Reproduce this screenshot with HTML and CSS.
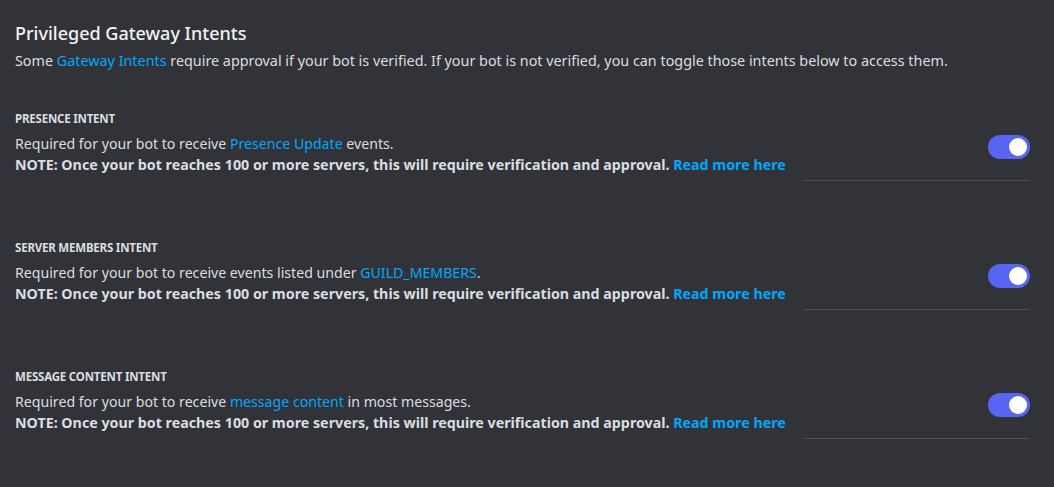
FILE: index.html
```html
<!DOCTYPE html>
<html>
<head>
<meta charset="utf-8">
<link rel="stylesheet" href="styles.css">
</head>
<body>
<div class="page">
  <h2 class="title">Privileged Gateway Intents</h2>
  <p class="desc">Some <a class="link">Gateway Intents</a> require approval if your bot is verified. If your bot is not verified, you can toggle those intents below to access them.</p>

  <section class="intent">
    <div class="label">PRESENCE INTENT</div>
    <div class="row">
      <div class="text">
        <div class="line">Required for your bot to receive <a class="link">Presence Update</a> events.</div>
        <div class="note">NOTE: Once your bot reaches 100 or more servers, this will require verification and approval. <a class="link">Read more here</a></div>
      </div>
      <div class="side"><span class="toggle"><span class="knob"></span></span></div>
    </div>
  </section>

  <section class="intent">
    <div class="label">SERVER MEMBERS INTENT</div>
    <div class="row">
      <div class="text">
        <div class="line">Required for your bot to receive events listed under <a class="link">GUILD_MEMBERS</a>.</div>
        <div class="note">NOTE: Once your bot reaches 100 or more servers, this will require verification and approval. <a class="link">Read more here</a></div>
      </div>
      <div class="side"><span class="toggle"><span class="knob"></span></span></div>
    </div>
  </section>

  <section class="intent">
    <div class="label">MESSAGE CONTENT INTENT</div>
    <div class="row">
      <div class="text">
        <div class="line">Required for your bot to receive <a class="link">message content</a> in most messages.</div>
        <div class="note">NOTE: Once your bot reaches 100 or more servers, this will require verification and approval. <a class="link">Read more here</a></div>
      </div>
      <div class="side"><span class="toggle"><span class="knob"></span></span></div>
    </div>
  </section>
</div>
</body>
</html>
```

FILE: styles.css
```css
html, body {
  margin: 0;
  padding: 0;
  background: #313338;
}
body {
  font-family: "Noto Sans", "Open Sans", sans-serif;
  color: #dbdee1;
  width: 1054px;
  height: 487px;
  overflow: hidden;
}
.page {
  padding: 20px 24px 0 15px;
}
.title {
  margin: 0;
  font-size: 18px;
  font-weight: 500;
  line-height: 26px;
  color: #f2f3f5;
}
.desc {
  margin: 5px 0 0;
  font-size: 14.35px;
  line-height: 20px;
}
.link {
  color: #00a8fc;
  text-decoration: none;
}
.intent {
  margin-top: 40px;
}
.intent + .intent {
  margin-top: 59px;
}
.label {
  font-size: 11.5px;
  font-weight: 700;
  line-height: 16px;
  letter-spacing: -0.2px;
  color: #dbdee1;
}
.row {
  display: flex;
  margin-top: 7px;
}
.text {
  flex: 1;
}
.line {
  font-size: 14.15px;
  line-height: 20px;
}
.note {
  font-size: 14.25px;
  font-weight: 700;
  line-height: 22px;
}
.side {
  width: 226px;
  display: flex;
  justify-content: flex-end;
  align-items: flex-start;
  border-bottom: 1px solid #4e5058;
  height: 46px;
}
.toggle {
  margin-top: 1px;
  width: 42px;
  height: 24px;
  border-radius: 12px;
  background: #5865f2;
  display: flex;
  align-items: center;
  justify-content: flex-end;
  padding-right: 3px;
  box-sizing: border-box;
}
.knob {
  width: 18px;
  height: 18px;
  border-radius: 50%;
  background: #ffffff;
}
```
